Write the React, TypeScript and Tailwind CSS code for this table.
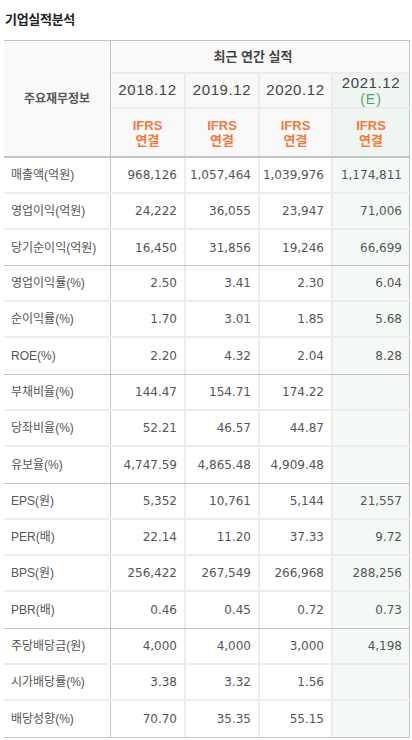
const YEARS = ["2018.12", "2019.12", "2020.12"];

const GROUPS: string[][][] = [
  [
    ["매출액(억원)", "968,126", "1,057,464", "1,039,976", "1,174,811"],
    ["영업이익(억원)", "24,222", "36,055", "23,947", "71,006"],
    ["당기순이익(억원)", "16,450", "31,856", "19,246", "66,699"],
  ],
  [
    ["영업이익률(%)", "2.50", "3.41", "2.30", "6.04"],
    ["순이익률(%)", "1.70", "3.01", "1.85", "5.68"],
    ["ROE(%)", "2.20", "4.32", "2.04", "8.28"],
  ],
  [
    ["부채비율(%)", "144.47", "154.71", "174.22", ""],
    ["당좌비율(%)", "52.21", "46.57", "44.87", ""],
    ["유보율(%)", "4,747.59", "4,865.48", "4,909.48", ""],
  ],
  [
    ["EPS(원)", "5,352", "10,761", "5,144", "21,557"],
    ["PER(배)", "22.14", "11.20", "37.33", "9.72"],
    ["BPS(원)", "256,422", "267,549", "266,968", "288,256"],
    ["PBR(배)", "0.46", "0.45", "0.72", "0.73"],
  ],
  [
    ["주당배당금(원)", "4,000", "4,000", "3,000", "4,198"],
    ["시가배당률(%)", "3.38", "3.32", "1.56", ""],
    ["배당성향(%)", "70.70", "35.35", "55.15", ""],
  ],
];

const KR = "font-['Liberation_Sans','Noto_Sans_CJK_KR',sans-serif]";
const NUM = "font-['DejaVu_Sans',sans-serif]";
const WIDTHS = ["w-[75px]", "w-[74px]", "w-[73px]"];

const Ifrs = () => (
  <div className={`flex flex-col items-center text-[13px] font-bold leading-[15px] text-[#f27a3e] ${KR}`}>
    <span>IFRS</span>
    <span>연결</span>
  </div>
);

const DataRow = ({ row, last, first }: { row: string[]; last: boolean; first: boolean }) => {
  const h = last ? (first ? "h-[36px]" : "h-[37px]") : "h-[36px]";
  const border = last ? "border-b border-[#c4c4c4]" : "border-b-2 border-[#ececec]";
  return (
    <div className={`flex ${h} ${border}`}>
      <div className={`w-[107px] shrink-0 flex items-center pl-[7px] border-r border-[#c4c4c4] text-[12px] text-[#555] ${KR}`}>
        {row[0]}
      </div>
      {row.slice(1, 4).map((v, i) => (
        <div
          key={i}
          className={`${WIDTHS[i]} shrink-0 flex items-center justify-end pr-[7px] border-r-2 border-[#ececec] text-[12px] text-[#555] ${NUM}`}
        >
          {v}
        </div>
      ))}
      <div className={`w-[77px] shrink-0 flex items-center justify-end pr-[7px] bg-[#f4f9f5] border-r border-[#c4c4c4] text-[12px] text-[#555] ${NUM}`}>
        {row[4]}
      </div>
    </div>
  );
};

export default function App() {
  return (
    <div className="w-[412px] bg-white">
      <div className={`h-[40px] flex items-center pl-[5px] text-[13px] font-bold text-[#222] tracking-[-0.3px] ${KR}`}>
        기업실적분석
      </div>

      <div className="ml-[4px] w-[406px] border-t border-[#c4c4c4]">
        {/* header */}
        <div className="flex border-b-2 border-[#c4c4c4] bg-[#f9f9f9]">
          <div className={`w-[107px] shrink-0 flex items-center justify-center border-r border-[#c4c4c4] text-[12px] font-semibold text-[#555] ${KR}`}>
            주요재무정보
          </div>
          <div className="flex flex-col">
            <div className={`h-[33px] flex items-center justify-center pr-[14px] border-b-2 border-[#ececec] border-r border-r-[#c4c4c4] text-[13px] font-bold text-[#444] ${KR}`}>
              최근 연간 실적
            </div>
            <div className="flex h-[35px] border-b-2 border-[#ececec]">
              {YEARS.map((y, i) => (
                <div
                  key={y}
                  className={`${WIDTHS[i]} shrink-0 flex items-center justify-center border-r-2 border-[#ececec] text-[15px] tracking-[0.6px] text-[#444] font-['Liberation_Sans',sans-serif]`}
                >
                  {y}
                </div>
              ))}
              <div className="w-[77px] shrink-0 flex flex-col items-center justify-center bg-[#eff5f0] border-r border-[#c4c4c4] font-['Liberation_Sans',sans-serif] leading-[16px]">
                <span className="text-[15px] tracking-[0.6px] text-[#444]">2021.12</span>
                <span className="text-[14px] tracking-[1px] text-[#4fa865]">(E)</span>
              </div>
            </div>
            <div className="flex h-[47px]">
              {WIDTHS.map((w, i) => (
                <div key={i} className={`${w} shrink-0 flex items-center justify-center border-r-2 border-[#ececec]`}>
                  <Ifrs />
                </div>
              ))}
              <div className="w-[77px] shrink-0 flex items-center justify-center bg-[#eff5f0] border-r border-[#c4c4c4]">
                <Ifrs />
              </div>
            </div>
          </div>
        </div>

        {/* body */}
        {GROUPS.map((g, gi) => (
          <div key={gi}>
            {g.map((row, ri) => (
              <DataRow key={ri} row={row} last={ri === g.length - 1} first={gi === 0} />
            ))}
          </div>
        ))}
      </div>
    </div>
  );
}
